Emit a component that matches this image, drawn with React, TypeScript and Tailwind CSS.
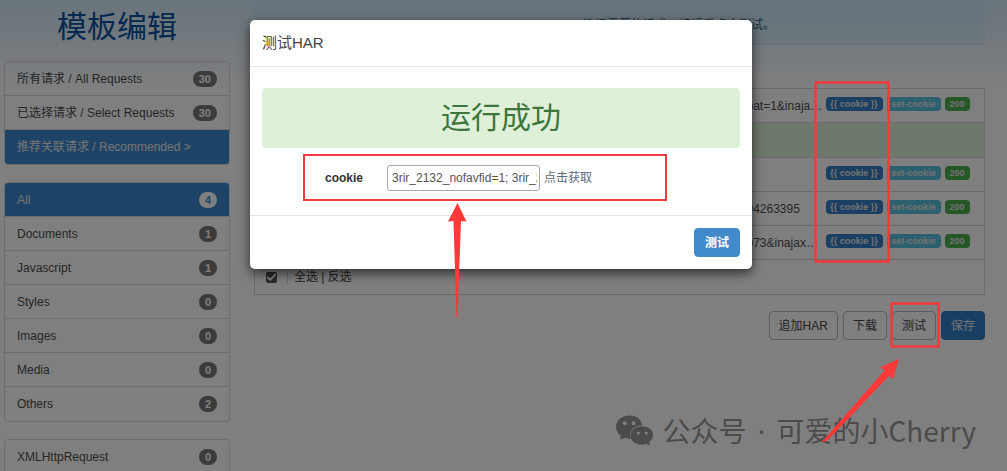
import React from "react";
import { Check } from "lucide-react";

type Item = { label: string; count?: number; active?: boolean };

const requestItems: Item[] = [
  { label: "所有请求 / All Requests", count: 30 },
  { label: "已选择请求 / Select Requests", count: 30 },
  { label: "推荐关联请求 / Recommended >", active: true },
];
const typeItems: Item[] = [
  { label: "All", count: 4, active: true },
  { label: "Documents", count: 1 },
  { label: "Javascript", count: 1 },
  { label: "Styles", count: 0 },
  { label: "Images", count: 0 },
  { label: "Media", count: 0 },
  { label: "Others", count: 2 },
];
const otherItems: Item[] = [{ label: "XMLHttpRequest", count: 0 }];

function ListGroup({ items, name }: { items: Item[]; name: string }) {
  return (
    <nav
      aria-label={name}
      className="shrink-0 divide-y divide-[#dadada] overflow-hidden rounded border border-[#dadada]"
    >
      {items.map((item) => (
        <a
          key={item.label}
          href="#"
          className={
            item.active
              ? "flex h-[34px] items-center justify-between bg-[#3a88cc] px-3 text-[#e8e8e8]"
              : "flex h-[34px] items-center justify-between px-3 text-[#4c4c4c]"
          }
        >
          <span>{item.label}</span>
          {item.count !== undefined && (
            <span
              className={
                item.active
                  ? "rounded-full bg-white px-[6px] text-[11px] leading-4 font-bold text-[#428bca]"
                  : "rounded-full bg-[#777] px-[6px] text-[11px] leading-4 font-bold text-white"
              }
            >
              {item.count}
            </span>
          )}
        </a>
      ))}
    </nav>
  );
}

const rows = [
  { url: "bat=1&inaja…", tags: true },
  { url: "", tags: false },
  { url: "", tags: true },
  { url: "94263395", tags: true },
  { url: "073&inajax…", tags: true },
];

const plainButton =
  "h-[29px] rounded border border-[#bbb] px-[9px] text-[#444]";

export default function App() {
  return (
    <div className="relative min-h-screen overflow-hidden bg-[linear-gradient(#d1e9f8_0px,#ffffff_92px)] font-['Liberation_Sans','Noto_Sans_CJK_SC',sans-serif] text-xs">
      <div className="flex h-screen gap-6 overflow-hidden pr-[22px] pl-1">
        <aside className="flex w-[226px] shrink-0 flex-col gap-[17px]">
          <h1 className="-mb-[17px] h-[61px] shrink-0 pt-1 text-center text-[30px] leading-[46px] text-[#08509c]">
            模板编辑
          </h1>
          <ListGroup items={requestItems} name="Requests" />
          <ListGroup items={typeItems} name="Types" />
          <ListGroup items={otherItems} name="Other" />
        </aside>

        <main className="min-w-0 flex-1">
          <p className="mb-[43px] h-[45px] border-b border-[#c9e0ee] bg-[#c9e6f8]/50 pt-[17px] pr-[210px] text-right text-[#31607f]">
            选择需要的请求，编辑后点击测试。
          </p>
          <table className="w-full table-fixed border border-[#d4d4d4]">
            <tbody>
              {rows.map((row, i) => (
                <tr
                  key={i}
                  className={
                    row.tags
                      ? "h-[34px] border-b border-[#d4d4d4]"
                      : "h-[35px] border-b border-[#d4d4d4] bg-[#dff0d8]"
                  }
                >
                  <td />
                  <td className="w-[79px] whitespace-nowrap text-[#4c4c4c]">
                    {row.url}
                  </td>
                  <td className="w-[159px]">
                    {row.tags && (
                      <div className="-mt-1 flex gap-1 text-[9px] leading-[14px] font-bold text-[#e4e4e4]">
                        <span className="w-[57px] rounded-sm bg-[#347fc4] text-center">
                          {"{{ cookie }}"}
                        </span>
                        <span className="w-[54px] rounded-sm bg-[#5bc0de] text-center">
                          set-cookie
                        </span>
                        <span className="w-[25px] rounded-sm bg-[#4cae4c] text-center">
                          200
                        </span>
                      </div>
                    )}
                  </td>
                </tr>
              ))}
              <tr className="h-[35px]">
                <td colSpan={3}>
                  <div className="flex h-5 items-center pl-[11px]">
                    <label className="relative mr-[10px] size-[11px]">
                      <input
                        type="checkbox"
                        aria-label="全选"
                        defaultChecked
                        className="block size-[11px] appearance-none rounded-xs bg-[#555]"
                      />
                      <Check
                        className="pointer-events-none absolute inset-0 text-white"
                        size={11}
                        strokeWidth={4}
                      />
                    </label>
                    <span className="border-l border-[#ddd] pl-[6px] text-[#444]">
                      全选 | 反选
                    </span>
                  </div>
                </td>
              </tr>
            </tbody>
          </table>
          <div className="mt-4 flex justify-end gap-[5px]">
            <button className={plainButton}>追加HAR</button>
            <button className={plainButton}>下载</button>
            <button className={plainButton}>测试</button>
            <button className="h-[29px] rounded border border-[#357ebd] bg-[#2f7fc5] px-[9px] text-[#e8e8e8]">
              保存
            </button>
          </div>
        </main>
      </div>

      <div className="absolute inset-0 bg-black/50" />

      <div className="absolute inset-x-0 top-5 flex justify-center pr-[5px]">
        <section
          role="dialog"
          aria-labelledby="dialog-title"
          className="w-[502px] rounded-[5px] bg-white shadow-[0_4px_12px_rgba(0,0,0,0.65)]"
        >
          <header className="border-b border-[#e5e5e5] px-3 py-3">
            <h2 id="dialog-title" className="text-[15px] leading-[22px] text-[#444]">
              测试HAR
            </h2>
          </header>
          <div className="px-3 pt-[21px] pb-[14px]">
            <div className="rounded bg-[#dff0d8] text-center text-[30px] leading-[60px] text-[#3c763d]">
              运行成功
            </div>
            <form className="mt-[6px] ml-[41px] flex h-[47px] w-[364px] items-center border-2 border-[#f43a3a] pl-5">
              <label htmlFor="cookie" className="w-[62px] font-bold text-[#333]">
                cookie
              </label>
              <input
                id="cookie"
                defaultValue="3rir_2132_nofavfid=1; 3rir_2132_saltkey"
                className="h-[26px] w-[153px] rounded-[3px] border border-[#aaa] px-1 pr-[2px] text-xs text-[#555]"
              />
              <a href="#" className="ml-1 text-[#5a6878]">
                点击获取
              </a>
            </form>
          </div>
          <footer className="flex justify-end border-t border-[#e5e5e5] p-3">
            <button className="h-[29px] rounded border border-[#428bca] bg-[#428bca] px-[10px] font-bold text-white">
              测试
            </button>
          </footer>
        </section>
      </div>

      <div className="absolute right-[31px] bottom-5 flex items-center gap-2 font-['Noto_Sans_CJK_SC',sans-serif] text-[28px] leading-10 text-[#4b4b4b]">
        <svg width="38" height="32" viewBox="0 0 39 32" fill="#4b4b4b" aria-hidden="true">
          <path d="M14 0C6 0 0 5 0 12c0 4 2 7 5 9l-1 4 5-2 5 1h1C13 15 19 10 27 10 26 4 21 0 14 0Z" />
          <path d="M27 11c-7 0-12 4-12 10s5 9 12 9l4-1 4 2-1-4c3-2 4-4 4-7 0-5-5-9-11-9Z" />
          <g fill="#808080">
            <circle cx="9" cy="8" r="2" />
            <circle cx="18" cy="8" r="2" />
            <circle cx="23" cy="18" r="1.6" />
            <circle cx="31" cy="18" r="1.6" />
          </g>
        </svg>
        <span>
          公众号 <span className="font-['Noto_Sans'] px-[5px]">·</span> 可爱的小Cherry
        </span>
      </div>

      <svg
        className="pointer-events-none absolute top-0 left-0"
        width="1007"
        height="471"
        viewBox="0 0 1007 471"
        aria-hidden="true"
      >
        <g fill="none" stroke="#f43a3a" strokeWidth="2.5">
          <rect x="815.5" y="82.5" width="73" height="179" />
          <rect x="891.5" y="303.5" width="47" height="43" />
        </g>
        <g fill="#ff3838">
          <path d="M457.5 203 448 221.500 453.500 221 456.500 318H457.500L461 221 466.500 221.500Z" />
          <path d="M899 359 880 367.500 885 370 821 443 828 440 889 376 893 379Z" />
        </g>
      </svg>
    </div>
  );
}
